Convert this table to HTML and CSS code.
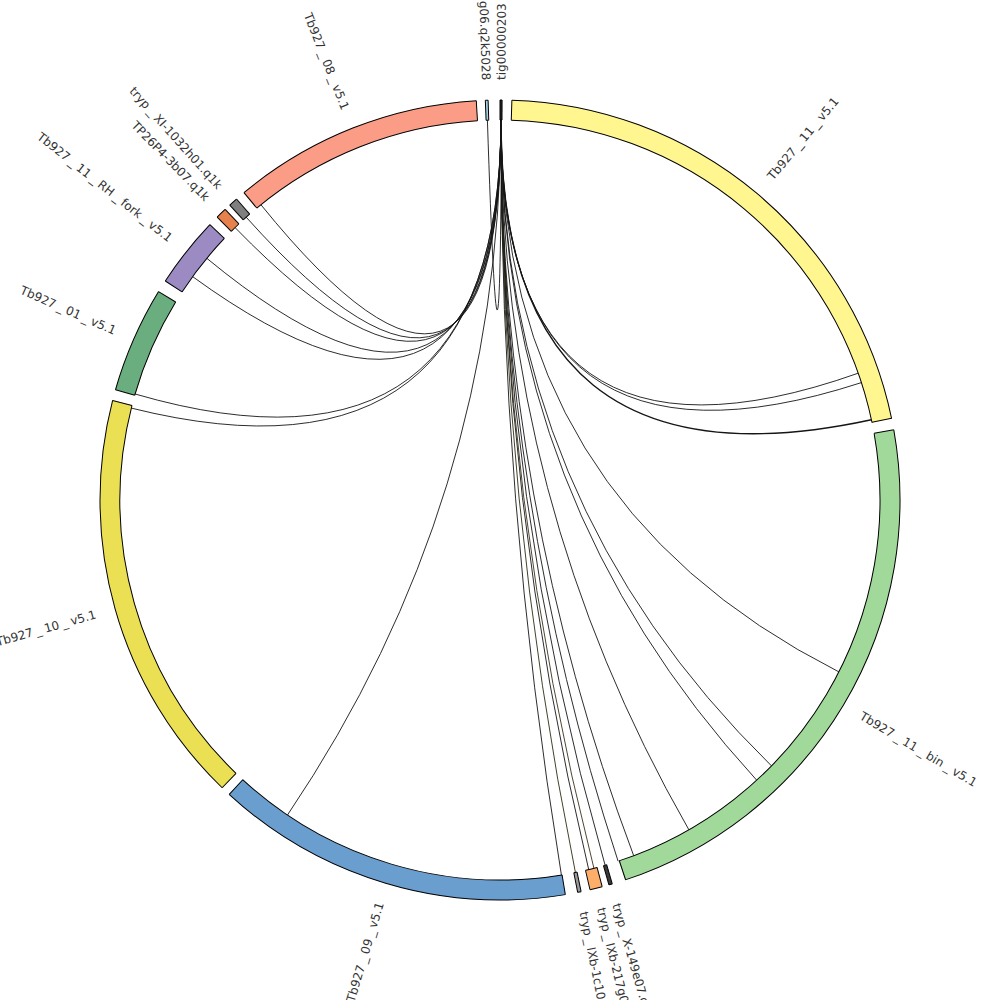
FILE: index.html
```html
<!DOCTYPE html>
<html lang="en">
<head>
<meta charset="utf-8">
<title>Circos</title>
<link rel="stylesheet" href="styles.css">
</head>
<body>
<svg class="chart" width="1000" height="1000" viewBox="0 0 1000 1000" xmlns="http://www.w3.org/2000/svg">
  <g class="links">
    <path class="link" d="M501,120 Q500,500 858.2,373.2"/>
    <path class="link" d="M501,120 Q500,500 861.4,382.6"/>
    <path class="link thick" d="M501,120 Q500,500 871.4,419.7"/>
    <path class="link" d="M501,120 Q500,500 838.9,671.9"/>
    <path class="link" d="M501,120 Q500,500 771.5,765.9"/>
    <path class="link" d="M501,120 Q500,500 756.7,780.2"/>
    <path class="link" d="M501,120 Q500,500 688.9,829.8"/>
    <path class="link" d="M501,120 Q500,500 633.7,855.7"/>
    <path class="link" d="M501,120 Q500,500 618.1,861.2"/>
    <path class="link" d="M501,120 Q500,500 605.1,865.2"/>
    <path class="link tint1" d="M501,120 Q500,500 593.9,868.2"/>
    <path class="link" d="M501,120 Q500,500 588.7,869.5"/>
    <path class="link tint2" d="M501,120 Q500,500 575.4,872.4"/>
    <path class="link" d="M501,120 Q500,500 561.4,875.0"/>
    <path class="link" d="M501,120 Q500,500 287.5,815.0"/>
    <path class="link" d="M501,120 Q500,500 260.9,204.7"/>
    <path class="link" d="M501,120 Q500,500 246.2,217.2"/>
    <path class="link" d="M501,120 Q500,500 235.1,227.6"/>
    <path class="link" d="M501,120 Q500,500 206.8,258.3"/>
    <path class="link" d="M501,120 Q500,500 192.6,276.6"/>
    <path class="link" d="M501,120 Q500,500 135.1,394.0"/>
    <path class="link" d="M501,120 Q500,500 131.3,408.1"/>
    <path class="link" d="M487.4,120.2 Q500,500 501.5,120"/>
  </g>

  <g class="segments">
    <g transform="rotate(-90 500 500)">
      <circle class="band c-tig" cx="500" cy="500" r="390" stroke-dasharray="2.04 3000"/>
      <circle class="edge" cx="500" cy="500" r="400" stroke-dasharray="2.09 3000"/>
      <circle class="edge" cx="500" cy="500" r="380" stroke-dasharray="1.99 3000"/>
      <line class="cap" x1="880" y1="500" x2="900" y2="500"/>
      <line class="cap" x1="880" y1="500" x2="900" y2="500" transform="rotate(0.3 500 500)"/>
    </g>
    <g transform="rotate(-88.3 500 500)">
      <circle class="band c-11" cx="500" cy="500" r="390" stroke-dasharray="520.72 3000"/>
      <circle class="edge" cx="500" cy="500" r="400" stroke-dasharray="534.07 3000"/>
      <circle class="edge" cx="500" cy="500" r="380" stroke-dasharray="507.37 3000"/>
      <line class="cap" x1="880" y1="500" x2="900" y2="500"/>
      <line class="cap" x1="880" y1="500" x2="900" y2="500" transform="rotate(76.5 500 500)"/>
    </g>
    <g transform="rotate(-10.1 500 500)">
      <circle class="band c-bin" cx="500" cy="500" r="390" stroke-dasharray="556.80 3000"/>
      <circle class="edge" cx="500" cy="500" r="400" stroke-dasharray="571.07 3000"/>
      <circle class="edge" cx="500" cy="500" r="380" stroke-dasharray="542.52 3000"/>
      <line class="cap" x1="880" y1="500" x2="900" y2="500"/>
      <line class="cap" x1="880" y1="500" x2="900" y2="500" transform="rotate(81.8 500 500)"/>
    </g>
    <g transform="rotate(73.7 500 500)">
      <circle class="band c-x149" cx="500" cy="500" r="390" stroke-dasharray="3.40 3000"/>
      <circle class="edge" cx="500" cy="500" r="400" stroke-dasharray="3.49 3000"/>
      <circle class="edge" cx="500" cy="500" r="380" stroke-dasharray="3.32 3000"/>
      <line class="cap" x1="880" y1="500" x2="900" y2="500"/>
      <line class="cap" x1="880" y1="500" x2="900" y2="500" transform="rotate(0.5 500 500)"/>
    </g>
    <g transform="rotate(75.2 500 500)">
      <circle class="band c-217" cx="500" cy="500" r="390" stroke-dasharray="12.25 3000"/>
      <circle class="edge" cx="500" cy="500" r="400" stroke-dasharray="12.57 3000"/>
      <circle class="edge" cx="500" cy="500" r="380" stroke-dasharray="11.94 3000"/>
      <line class="cap" x1="880" y1="500" x2="900" y2="500"/>
      <line class="cap" x1="880" y1="500" x2="900" y2="500" transform="rotate(1.8 500 500)"/>
    </g>
    <g transform="rotate(78.3 500 500)">
      <circle class="band c-1c10" cx="500" cy="500" r="390" stroke-dasharray="3.40 3000"/>
      <circle class="edge" cx="500" cy="500" r="400" stroke-dasharray="3.49 3000"/>
      <circle class="edge" cx="500" cy="500" r="380" stroke-dasharray="3.32 3000"/>
      <line class="cap" x1="880" y1="500" x2="900" y2="500"/>
      <line class="cap" x1="880" y1="500" x2="900" y2="500" transform="rotate(0.5 500 500)"/>
    </g>
    <g transform="rotate(80.6 500 500)">
      <circle class="band c-09" cx="500" cy="500" r="390" stroke-dasharray="353.95 3000"/>
      <circle class="edge" cx="500" cy="500" r="400" stroke-dasharray="363.03 3000"/>
      <circle class="edge" cx="500" cy="500" r="380" stroke-dasharray="344.88 3000"/>
      <line class="cap" x1="880" y1="500" x2="900" y2="500"/>
      <line class="cap" x1="880" y1="500" x2="900" y2="500" transform="rotate(52 500 500)"/>
    </g>
    <g transform="rotate(134 500 500)">
      <circle class="band c-10" cx="500" cy="500" r="390" stroke-dasharray="411.13 3000"/>
      <circle class="edge" cx="500" cy="500" r="400" stroke-dasharray="421.67 3000"/>
      <circle class="edge" cx="500" cy="500" r="380" stroke-dasharray="400.59 3000"/>
      <line class="cap" x1="880" y1="500" x2="900" y2="500"/>
      <line class="cap" x1="880" y1="500" x2="900" y2="500" transform="rotate(60.4 500 500)"/>
    </g>
    <g transform="rotate(196 500 500)">
      <circle class="band c-01" cx="500" cy="500" r="390" stroke-dasharray="104.82 3000"/>
      <circle class="edge" cx="500" cy="500" r="400" stroke-dasharray="107.51 3000"/>
      <circle class="edge" cx="500" cy="500" r="380" stroke-dasharray="102.14 3000"/>
      <line class="cap" x1="880" y1="500" x2="900" y2="500"/>
      <line class="cap" x1="880" y1="500" x2="900" y2="500" transform="rotate(15.4 500 500)"/>
    </g>
    <g transform="rotate(213.2 500 500)">
      <circle class="band c-rh" cx="500" cy="500" r="390" stroke-dasharray="70.11 3000"/>
      <circle class="edge" cx="500" cy="500" r="400" stroke-dasharray="71.91 3000"/>
      <circle class="edge" cx="500" cy="500" r="380" stroke-dasharray="68.31 3000"/>
      <line class="cap" x1="880" y1="500" x2="900" y2="500"/>
      <line class="cap" x1="880" y1="500" x2="900" y2="500" transform="rotate(10.3 500 500)"/>
    </g>
    <g transform="rotate(225 500 500)">
      <circle class="band c-tp" cx="500" cy="500" r="390" stroke-dasharray="10.89 3000"/>
      <circle class="edge" cx="500" cy="500" r="400" stroke-dasharray="11.17 3000"/>
      <circle class="edge" cx="500" cy="500" r="380" stroke-dasharray="10.61 3000"/>
      <line class="cap" x1="880" y1="500" x2="900" y2="500"/>
      <line class="cap" x1="880" y1="500" x2="900" y2="500" transform="rotate(1.6 500 500)"/>
    </g>
    <g transform="rotate(227.5 500 500)">
      <circle class="band c-xi" cx="500" cy="500" r="390" stroke-dasharray="8.85 3000"/>
      <circle class="edge" cx="500" cy="500" r="400" stroke-dasharray="9.08 3000"/>
      <circle class="edge" cx="500" cy="500" r="380" stroke-dasharray="8.62 3000"/>
      <line class="cap" x1="880" y1="500" x2="900" y2="500"/>
      <line class="cap" x1="880" y1="500" x2="900" y2="500" transform="rotate(1.3 500 500)"/>
    </g>
    <g transform="rotate(230.2 500 500)">
      <circle class="band c-08" cx="500" cy="500" r="390" stroke-dasharray="247.77 3000"/>
      <circle class="edge" cx="500" cy="500" r="400" stroke-dasharray="254.12 3000"/>
      <circle class="edge" cx="500" cy="500" r="380" stroke-dasharray="241.41 3000"/>
      <line class="cap" x1="880" y1="500" x2="900" y2="500"/>
      <line class="cap" x1="880" y1="500" x2="900" y2="500" transform="rotate(36.4 500 500)"/>
    </g>
    <g transform="rotate(267.9 500 500)">
      <circle class="band c-g06" cx="500" cy="500" r="390" stroke-dasharray="2.72 3000"/>
      <circle class="edge" cx="500" cy="500" r="400" stroke-dasharray="2.79 3000"/>
      <circle class="edge" cx="500" cy="500" r="380" stroke-dasharray="2.65 3000"/>
      <line class="cap" x1="880" y1="500" x2="900" y2="500"/>
      <line class="cap" x1="880" y1="500" x2="900" y2="500" transform="rotate(0.4 500 500)"/>
    </g>
  </g>

  <g class="labels">
    <text class="lbl" x="920" y="500" transform="rotate(-89.8 500 500)">tig00000203</text>
    <text class="lbl" x="920" y="500" transform="rotate(-50 500 500)">Tb927<tspan dx="3">_</tspan><tspan dx="3">11</tspan><tspan dx="3">_</tspan><tspan dx="3">v5.1</tspan></text>
    <text class="lbl" x="920" y="500" transform="rotate(30.8 500 500)">Tb927<tspan dx="3">_</tspan><tspan dx="3">11</tspan><tspan dx="3">_</tspan><tspan dx="3">bin</tspan><tspan dx="3">_</tspan><tspan dx="3">v5.1</tspan></text>
    <text class="lbl" x="920" y="500" transform="rotate(73.95 500 500)">tryp<tspan dx="3">_</tspan><tspan dx="3">X-149e07.q1k</tspan></text>
    <text class="lbl" x="920" y="500" transform="rotate(76.1 500 500)">tryp<tspan dx="3">_</tspan><tspan dx="3">IXb-217g06.q1k</tspan></text>
    <text class="lbl" x="920" y="500" transform="rotate(78.55 500 500)">tryp<tspan dx="3">_</tspan><tspan dx="3">IXb-1c10.q1k</tspan></text>
    <text class="lbl end" x="80" y="500" transform="rotate(286.6 500 500)">Tb927<tspan dx="3">_</tspan><tspan dx="3">09</tspan><tspan dx="3">_</tspan><tspan dx="3">v5.1</tspan></text>
    <text class="lbl end" x="80" y="500" transform="rotate(344.2 500 500)">Tb927<tspan dx="3">_</tspan><tspan dx="3">10</tspan><tspan dx="3">_</tspan><tspan dx="3">v5.1</tspan></text>
    <text class="lbl end" x="80" y="500" transform="rotate(23.7 500 500)">Tb927<tspan dx="3">_</tspan><tspan dx="3">01</tspan><tspan dx="3">_</tspan><tspan dx="3">v5.1</tspan></text>
    <text class="lbl end" x="80" y="500" transform="rotate(38.35 500 500)">Tb927<tspan dx="3">_</tspan><tspan dx="3">11</tspan><tspan dx="3">_</tspan><tspan dx="3">RH</tspan><tspan dx="3">_</tspan><tspan dx="3">fork</tspan><tspan dx="3">_</tspan><tspan dx="3">v5.1</tspan></text>
    <text class="lbl end" x="80" y="500" transform="rotate(45.8 500 500)">TP26P4-3b07.q1k</text>
    <text class="lbl end" x="80" y="500" transform="rotate(48.15 500 500)">tryp<tspan dx="3">_</tspan><tspan dx="3">XI-1032h01.q1k</tspan></text>
    <text class="lbl end" x="80" y="500" transform="rotate(68.4 500 500)">Tb927<tspan dx="3">_</tspan><tspan dx="3">08</tspan><tspan dx="3">_</tspan><tspan dx="3">v5.1</tspan></text>
    <text class="lbl end" x="80" y="500" transform="rotate(88.1 500 500)">g06.q2k5028</text>
  </g>
</svg>
</body>
</html>
```

FILE: styles.css
```css
html, body {
  margin: 0;
  padding: 0;
  background: #ffffff;
}

.chart {
  display: block;
  width: 1000px;
  height: 1000px;
  overflow: hidden;
}

.link {
  fill: none;
  stroke: #151515;
  stroke-width: 0.9;
}

.link.thick {
  stroke-width: 1.4;
}

.link.tint1 {
  stroke: #3a3218;
}

.link.tint2 {
  stroke: #2c2c10;
}

.band {
  fill: none;
  stroke-width: 20;
}

.edge {
  fill: none;
  stroke: #000000;
  stroke-width: 1;
}

.cap {
  stroke: #000000;
  stroke-width: 1;
}

.c-tig { stroke: #2b2b2b; }
.c-11 { stroke: #fff68f; }
.c-bin { stroke: #a1d99b; }
.c-x149 { stroke: #3a3a3a; }
.c-217 { stroke: #fdae6b; }
.c-1c10 { stroke: #9a9a9a; }
.c-09 { stroke: #6a9ecf; }
.c-10 { stroke: #ebe054; }
.c-01 { stroke: #6aae7f; }
.c-rh { stroke: #9b8bc2; }
.c-tp { stroke: #e6814c; }
.c-xi { stroke: #7f7f7f; }
.c-08 { stroke: #fb9d86; }
.c-g06 { stroke: #a6cee3; }

.lbl {
  font-family: "DejaVu Sans", "Liberation Sans", sans-serif;
  font-size: 12px;
  fill: #333333;
  dominant-baseline: central;
}

.lbl.end {
  text-anchor: end;
}
```
